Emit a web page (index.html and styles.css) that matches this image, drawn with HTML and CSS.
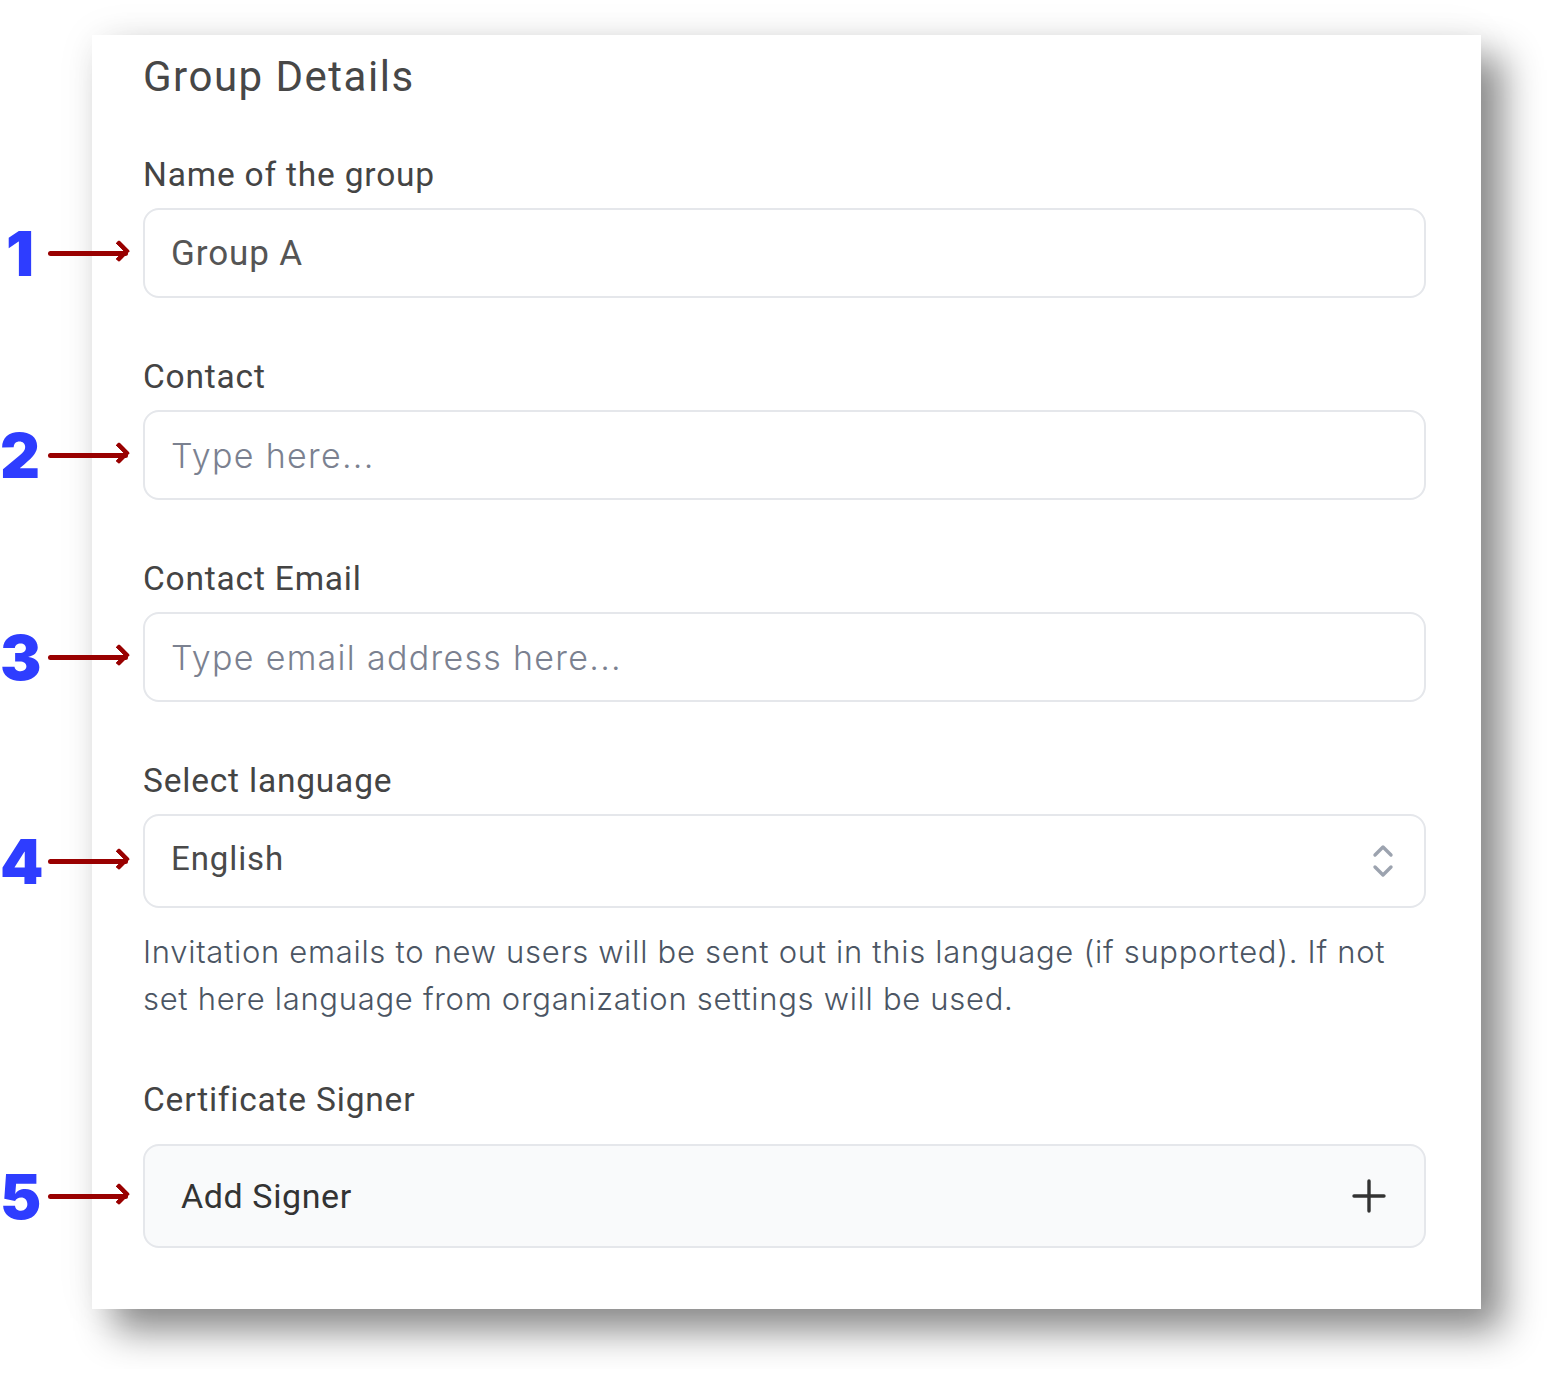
FILE: index.html
```html
<!DOCTYPE html>
<html lang="en">
<head>
	<meta charset="UTF-8">
	<title>Group Details</title>
<link rel="stylesheet" href="styles.css">
</head>
<body>
	<div class="page">
		<div class="card">
			<h1 class="title">Group Details</h1>

			<div class="field">
				<label class="label">Name of the group</label>
				<div class="row">
					<span class="mark"><b>1</b><i class="arrow"></i></span>
					<div class="input">Group A</div>
				</div>
			</div>

			<div class="field">
				<label class="label">Contact</label>
				<div class="row">
					<span class="mark"><b>2</b><i class="arrow"></i></span>
					<div class="input empty">Type here...</div>
				</div>
			</div>

			<div class="field">
				<label class="label">Contact Email</label>
				<div class="row">
					<span class="mark"><b>3</b><i class="arrow"></i></span>
					<div class="input empty">Type email address here...</div>
				</div>
			</div>

			<div class="field">
				<label class="label">Select language</label>
				<div class="row">
					<span class="mark"><b>4</b><i class="arrow"></i></span>
					<div class="input select">
						<span>English</span>
						<svg width="24" height="36" viewBox="0 0 24 36"><path d="M4 12 L12 4 L20 12 M4 24 L12 32 L20 24" fill="none" stroke="#9ca3af" stroke-width="3.4" stroke-linecap="round" stroke-linejoin="round"/></svg>
					</div>
				</div>
				<p class="help">Invitation emails to new users will be sent out in this language (if supported). If not set here language from organization settings will be used.</p>
			</div>

			<div class="field last">
				<label class="label">Certificate Signer</label>
				<div class="row">
					<span class="mark"><b>5</b><i class="arrow"></i></span>
					<div class="signer">
						<span>Add Signer</span>
						<svg width="34" height="34" viewBox="0 0 34 34"><path d="M17 2 V32 M2 17 H32" fill="none" stroke="#333" stroke-width="3.4" stroke-linecap="round"/></svg>
					</div>
				</div>
			</div>
		</div>
	</div>
</body>
</html>
```

FILE: styles.css
```css
body{
	margin: 0;
	background: #fff;
	font-family: Roboto, "Liberation Sans", sans-serif;
}
.page{
	padding: 35px 0 60px 92px;
}
.card{
	width: 1389px;
	height: 1274px;
	box-sizing: border-box;
	padding: 0 55px 0 51px;
	background: #fff;
	box-shadow: 22px 22px 36px rgba(0,0,0,0.45), 0 0 40px rgba(0,0,0,0.06);
}
.title{
	margin: 0;
	padding-top: 15px;
	font-size: 42px;
	line-height: 54px;
	font-weight: 400;
	color: #474747;
	letter-spacing: 1.5px;
}
.field{
	margin-top: 51px;
}
.field + .field{
	margin-top: 59px;
}
.field.last{
	margin-top: 58px;
}
.label{
	display: block;
	font-size: 33.5px;
	line-height: 40px;
	color: #444;
	letter-spacing: 0.8px;
	margin-bottom: 13px;
}
.row{
	position: relative;
}
.input{
	height: 90px;
	box-sizing: border-box;
	border: 2px solid #e5e7eb;
	border-radius: 16px;
	padding: 0 26px;
	display: flex;
	align-items: center;
	font-size: 35px;
	color: #555;
	letter-spacing: 0.9px;
}
.input.empty{
	font-family: Inter, "Liberation Sans", sans-serif;
	font-weight: 300;
	font-size: 34px;
	color: #7b8190;
	letter-spacing: 1.3px;
}
.select{
	height: 94px;
	justify-content: space-between;
	color: #4a4a4a;
	font-size: 33px;
	padding-right: 29px;
	padding-bottom: 6px;
}
.select svg{
	margin-top: 6px;
}
.help{
	margin: 20px 0 0;
	padding-right: 30px;
	font-family: Inter, "Liberation Sans", sans-serif;
	font-weight: 300;
	font-size: 31px;
	line-height: 47px;
	color: #4b5563;
	letter-spacing: 0.7px;
}
.last .label{
	margin-bottom: 24px;
}
.signer{
	height: 104px;
	box-sizing: border-box;
	border: 2px solid #e5e7eb;
	border-radius: 16px;
	background: #f9fafb;
	padding: 0 38px 0 36px;
	display: flex;
	align-items: center;
	justify-content: space-between;
	font-size: 34px;
	color: #333;
	letter-spacing: 0.6px;
}
.mark{
	position: absolute;
	left: -143px;
	top: 0;
	bottom: 0;
	width: 132px;
	display: flex;
	align-items: center;
}
.mark b{
	width: 40px;
	font-family: Inter, sans-serif;
	font-size: 62px;
	font-weight: 900;
	color: #2e3dff;
	text-align: center;
}
.arrow{
	position: relative;
	margin-left: 8px;
	width: 80px;
	height: 5px;
	background: #990000;
	border-radius: 3px;
}
.arrow:after{
	content: "";
	position: absolute;
	right: 1px;
	top: -8px;
	width: 16px;
	height: 16px;
	border-top: 5px solid #990000;
	border-right: 5px solid #990000;
	box-sizing: border-box;
	transform: rotate(45deg);
	border-radius: 2px;
}
```
